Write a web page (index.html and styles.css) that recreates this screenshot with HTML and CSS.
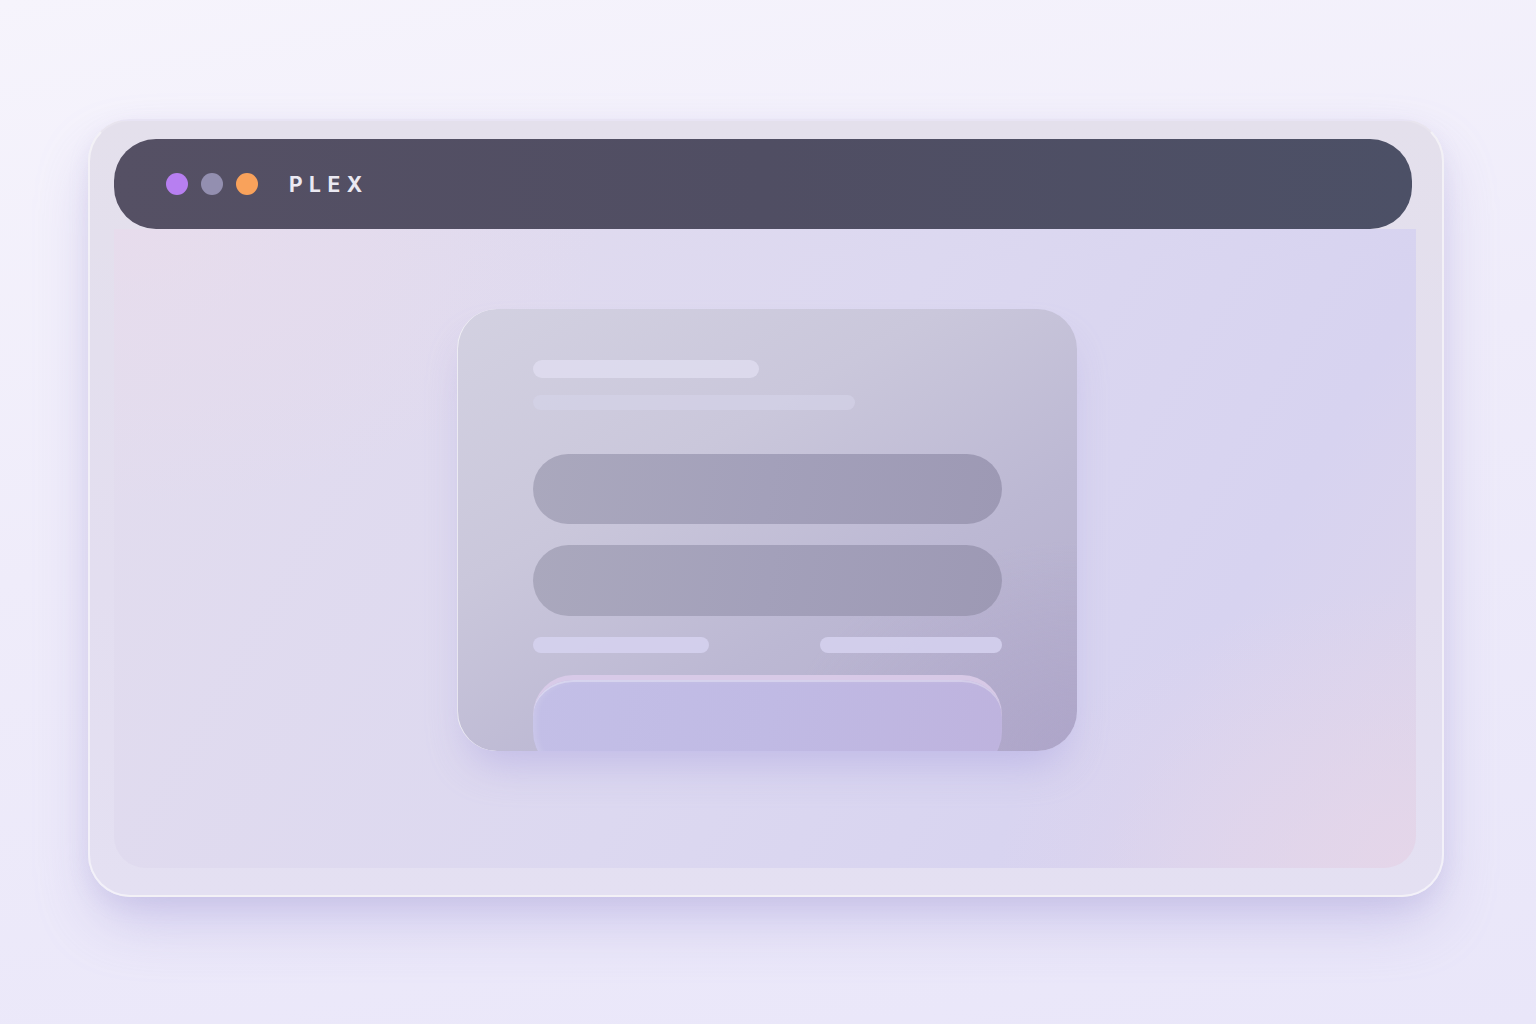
FILE: index.html
```html
<!DOCTYPE html>
<html>
<head>
<meta charset="utf-8">
<link rel="stylesheet" href="styles.css">
</head>
<body>
<div class="page">
  <div class="frame">
    <div class="titlebar">
      <span class="dot dot-purple"></span>
      <span class="dot dot-grey"></span>
      <span class="dot dot-orange"></span>
      <span class="brand">PLEX</span>
    </div>
    <div class="content">
      <div class="card">
        <div class="sk sk-title"></div>
        <div class="sk sk-sub"></div>
        <div class="field field-1"></div>
        <div class="field field-2"></div>
        <div class="row">
          <div class="sk sk-small"></div>
          <div class="sk sk-small sk-right"></div>
        </div>
        <div class="button"></div>
      </div>
    </div>
  </div>
</div>
</body>
</html>
```

FILE: styles.css
```css
html, body {
  margin: 0;
  padding: 0;
  width: 1536px;
  height: 1024px;
  overflow: hidden;
}
body {
  background: linear-gradient(170deg, #f6f4fc 0%, #efecfa 45%, #e9e6f9 100%);
  font-family: "Inter", "Open Sans", "Liberation Sans", sans-serif;
}
.page {
  padding: 119px 0 0 88px;
}
.frame {
  box-sizing: border-box;
  width: 1356px;
  height: 778px;
  border-radius: 42px;
  padding: 18px 26px 27px 24px;
  display: flex;
  flex-direction: column;
  background: linear-gradient(180deg, #e4e0ec 0%, #e3def0 60%, #e4e0f2 100%);
  border: 2px solid rgba(255,255,255,0.55);
  border-top-color: rgba(255,255,255,0.15);
  box-shadow: 0 30px 60px -10px rgba(160,150,215,0.45), 0 8px 20px rgba(170,160,210,0.15);
}
.titlebar {
  height: 90px;
  margin-right: 4px;
  border-radius: 42px;
  background: linear-gradient(90deg, #555064 0%, #504e63 50%, #4c5066 100%);
  display: flex;
  align-items: center;
  padding-left: 52px;
  flex-shrink: 0;
}
.dot {
  width: 22px;
  height: 22px;
  border-radius: 50%;
  margin-right: 13px;
  flex-shrink: 0;
}
.dot-purple { background: #b77ff1; }
.dot-grey { background: #938fb0; }
.dot-orange { background: #f9a25b; }
.brand {
  margin-left: 18px;
  color: #ebe9f2;
  font-weight: 700;
  font-size: 21px;
  letter-spacing: 6.5px;
}
.content {
  flex: 1;
  border-radius: 0 0 32px 32px;
  background:
    radial-gradient(ellipse 600px 400px at 100% 100%, rgba(232,214,232,0.7), transparent 70%),
    radial-gradient(ellipse 700px 400px at 0% 0%, rgba(232,220,236,0.8), transparent 70%),
    linear-gradient(120deg, #e3ddee 0%, #dcd8f0 50%, #d7d3f0 80%, #ddd5eb 100%);
  display: flex;
  justify-content: center;
  align-items: flex-start;
  padding-top: 80px;
}
.card {
  box-sizing: border-box;
  width: 620px;
  height: 442px;
  margin-left: 4px;
  flex-shrink: 0;
  border-radius: 40px;
  overflow: hidden;
  padding: 51px 75px 0 75px;
  display: flex;
  flex-direction: column;
  background:
    radial-gradient(ellipse 420px 300px at 100% 100%, rgba(170,160,200,0.55), transparent 70%),
    linear-gradient(150deg, #d3d1e1 0%, #cac7db 35%, #bcb8d3 65%, #b2abca 100%);
  border-left: 1.5px solid rgba(255,255,255,0.7);
  box-shadow: 0 24px 40px -12px rgba(160,150,220,0.45);
}
.card > * {
  flex-shrink: 0;
}
.sk {
  border-radius: 10px;
}
.sk-title {
  width: 226px;
  height: 18px;
  background: rgba(224,221,240,0.8);
}
.sk-sub {
  width: 322px;
  height: 15px;
  margin-top: 17px;
  background: rgba(214,211,234,0.6);
}
.field {
  height: 70px;
  border-radius: 36px;
  background: linear-gradient(100deg, #aaa8bd 0%, #a3a0ba 50%, #9d99b4 100%);
}
.field-1 { margin-top: 44px; }
.field-2 { margin-top: 21px; height: 71px; }
.row {
  margin-top: 21px;
  display: flex;
  justify-content: space-between;
}
.sk-small {
  width: 176px;
  height: 16px;
  background: rgba(214,210,240,0.85);
}
.sk-right { width: 182px; }
.button {
  margin-top: 22px;
  height: 92px;
  border-radius: 40px;
  background: linear-gradient(100deg, #c3bfe7 0%, #c0bae4 50%, #beb3de 100%);
  border-top: 5px solid rgba(220,204,232,0.85);
  box-shadow: inset 0 2px 0 rgba(255,255,255,0.3), inset 3px 0 6px rgba(255,255,255,0.15);
}
```
